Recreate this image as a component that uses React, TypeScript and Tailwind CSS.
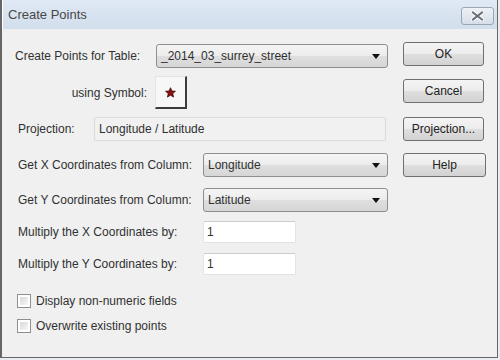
import React from "react";

const font = "font-['Liberation_Sans',Arial,sans-serif]";
const winBtn =
  "flex items-center justify-center h-[24px] rounded-[3px] border border-[#707070] bg-[linear-gradient(#f4f4f4,#ececec_50%,#dfdfdf_50%,#d2d2d2)] text-[12px] text-[#222]";

function Combo({ value, width }: { value: string; width: string }) {
  return (
    <div
      className={`flex items-center justify-between h-[24px] ${width} rounded-[3px] border border-[#8e8e8e] bg-[linear-gradient(#f5f5f5,#ececec_50%,#dfdfdf_50%,#d6d6d6)] pl-[4px] pr-[7px]`}
    >
      <span>{value}</span>
      <svg width="8" height="5" viewBox="0 0 8 5">
        <path d="M0 0H8L4 5Z" fill="#111" />
      </svg>
    </div>
  );
}

function TextBox({ value }: { value: string }) {
  return (
    <div className="flex items-center h-[22px] w-[93px] rounded-[2px] border border-[#e2e3e5] border-t-[#c9cbcf] bg-white pl-[3px]">
      {value}
    </div>
  );
}

function Check({ label }: { label: string }) {
  return (
    <div className="flex items-center h-[14px] pl-[15px]">
      <div className="w-[14px] h-[14px] border border-[#8f8f8f] bg-white p-[2px]">
        <div className="w-full h-full bg-linear-to-br from-[#d9d9d9] to-[#f7f7f7]" />
      </div>
      <span className="ml-[5px]">{label}</span>
    </div>
  );
}

function Star() {
  return (
    <svg width="11" height="11" viewBox="0 0 24 24">
      <path
        d="M12 1.5l3.1 7.2 7.7.6-5.9 5.1 1.8 7.6L12 17.9 5.3 22l1.8-7.6-5.9-5.1 7.7-.6z"
        fill="#8a1010"
        stroke="#3a0000"
        strokeWidth="1.6"
      />
    </svg>
  );
}

export default function App() {
  return (
    <div className={`w-[500px] h-[360px] bg-[#e9edf2] ${font} text-[12px] text-[#303030]`}>
      <div className="w-[498px] h-[358px] border-l-2 border-r border-b border-[#676767] bg-[#f0f0f0] flex flex-col">
        {/* title bar */}
        <div className="h-[29px] flex items-center justify-between bg-linear-to-b from-[#e0e9f5] to-[#d2deec] border-l border-white pl-[5px] pr-[3px]">
          <span className="text-[13px] text-[#474747]">Create Points</span>
          <div className="mt-[3px] w-[33px] h-[18px] rounded-[3px] border border-[#9ba6b5] bg-linear-to-b from-[#eef2f7] to-[#d5dee9] flex items-center justify-center">
            <svg width="13" height="10" viewBox="0 0 13 10">
              <path d="M2 1.5L11 8.5M11 1.5L2 8.5" stroke="#fff" strokeWidth="4" strokeLinecap="square" />
              <path d="M2 1.5L11 8.5M11 1.5L2 8.5" stroke="#6a6f76" strokeWidth="2" strokeLinecap="square" />
            </svg>
          </div>
        </div>

        <div className="flex flex-1">
          {/* left column */}
          <div className="w-[399px] flex flex-col">
            <div className="mt-[15px] flex items-center h-[24px] pl-[13px]">
              <span className="w-[141px]">Create Points for Table:</span>
              <Combo value="_2014_03_surrey_street" width="w-[232px]" />
            </div>

            <div className="mt-[8px] flex items-center h-[33px]">
              <span className="w-[145px] text-right">using Symbol:</span>
              <div className="ml-[8px] w-[32px] h-[33px] flex items-center justify-center bg-[#f7f7f7] border-t border-l border-[#e4e4e4] border-r-2 border-b-2 border-r-[#3c3c3c] border-b-[#3c3c3c]">
                <Star />
              </div>
            </div>

            <div className="mt-[8px] flex items-center h-[24px] pl-[16px]">
              <span className="w-[76px]">Projection:</span>
              <div className="flex items-center h-[24px] w-[292px] rounded-[2px] border border-[#dadada] bg-[#f1f1f1] pl-[4px]">
                Longitude / Latitude
              </div>
            </div>

            <div className="mt-[12px] flex items-center h-[24px] pl-[16px]">
              <span className="w-[185px]">Get X Coordinates from Column:</span>
              <Combo value="Longitude" width="w-[185px]" />
            </div>

            <div className="mt-[11px] flex items-center h-[24px] pl-[16px]">
              <span className="w-[185px]">Get Y Coordinates from Column:</span>
              <Combo value="Latitude" width="w-[185px]" />
            </div>

            <div className="mt-[9px] flex items-center h-[22px] pl-[16px]">
              <span className="w-[185px]">Multiply the X Coordinates by:</span>
              <TextBox value="1" />
            </div>

            <div className="mt-[10px] flex items-center h-[22px] pl-[16px]">
              <span className="w-[185px]">Multiply the Y Coordinates by:</span>
              <TextBox value="1" />
            </div>

            <div className="mt-[19px]">
              <Check label="Display non-numeric fields" />
            </div>
            <div className="mt-[11px]">
              <Check label="Overwrite existing points" />
            </div>
          </div>

          {/* right column */}
          <div className="flex flex-col pl-[2px]">
            <div className={`mt-[13px] w-[81px] ${winBtn}`}>OK</div>
            <div className={`mt-[13px] w-[81px] ${winBtn}`}>Cancel</div>
            <div className={`mt-[14px] w-[81px] ${winBtn}`}>Projection...</div>
            <div className={`mt-[12px] w-[83px] ${winBtn}`}>Help</div>
          </div>
        </div>
      </div>
    </div>
  );
}
